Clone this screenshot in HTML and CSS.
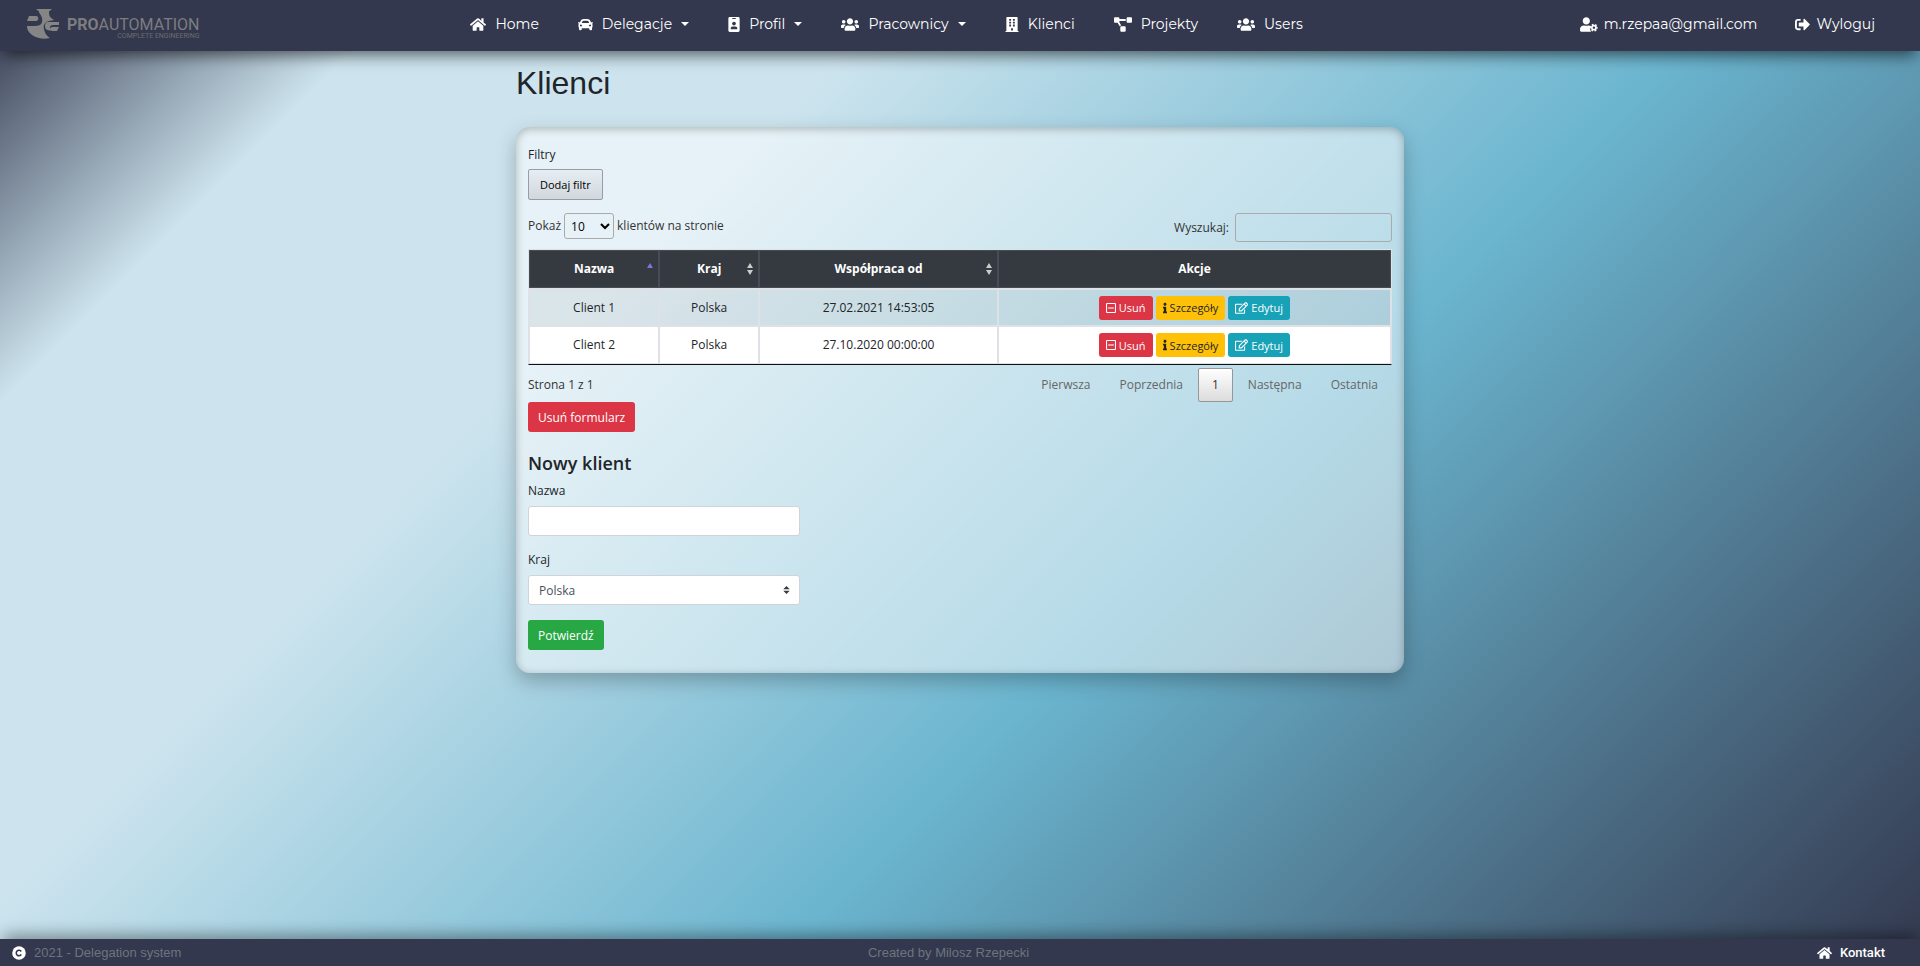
FILE: index.html
```html
<!DOCTYPE html>
<html lang="pl">
<head>
<meta charset="utf-8">
<title>Klienci - Delegation system</title>
<link rel="stylesheet" href="styles.css">
</head>
<body>
<svg class="sprite" aria-hidden="true">
  <symbol id="i-home" viewBox="0 0 576 512"><path d="M280.37 148.26L96 300.11V464a16 16 0 0 0 16 16l112.06-.29a16 16 0 0 0 15.92-16V368a16 16 0 0 1 16-16h64a16 16 0 0 1 16 16v95.64a16 16 0 0 0 16 16.05L464 480a16 16 0 0 0 16-16V300L295.67 148.26a12.19 12.19 0 0 0-15.3 0zM571.6 251.47L488 182.56V44.05a12 12 0 0 0-12-12h-56a12 12 0 0 0-12 12v72.61L318.47 43a48 48 0 0 0-61 0L4.34 251.47a12 12 0 0 0-1.6 16.9l25.5 31A12 12 0 0 0 45.15 301l235.22-193.74a12.19 12.19 0 0 1 15.3 0L530.9 301a12 12 0 0 0 16.9-1.6l25.5-31a12 12 0 0 0-1.7-16.93z"/></symbol>
  <symbol id="i-car" viewBox="0 0 512 512"><path d="M499.99 176h-59.87l-16.64-41.6C406.38 91.63 365.57 64 319.5 64h-127c-46.06 0-86.88 27.63-103.99 70.4L71.87 176H12.01C4.2 176-1.53 183.34.37 190.91l6 24C7.7 220.25 12.5 224 18.01 224h20.07C24.65 235.73 16 252.78 16 272v48c0 16.12 6.16 30.67 16 41.93V416c0 17.67 14.33 32 32 32h32c17.67 0 32-14.33 32-32v-32h256v32c0 17.67 14.33 32 32 32h32c17.67 0 32-14.33 32-32v-54.07c9.84-11.25 16-25.8 16-41.93v-48c0-19.22-8.65-36.27-22.07-48H494c5.51 0 10.31-3.75 11.64-9.09l6-24c1.89-7.57-3.84-14.91-11.65-14.91zm-352.06-17.83c7.29-18.22 24.94-30.17 44.57-30.17h127c19.63 0 37.28 11.95 44.57 30.17L384 208H128l19.93-49.83zM96 319.8c-19.2 0-32-12.76-32-31.9S76.8 256 96 256s48 28.71 48 47.85-28.8 15.95-48 15.95zm320 0c-19.2 0-48 3.19-48-15.95S396.8 256 416 256s32 12.76 32 31.9-12.8 31.9-32 31.9z"/></symbol>
  <symbol id="i-badge" viewBox="0 0 384 512"><path d="M336 0H48C21.5 0 0 21.5 0 48v416c0 26.5 21.5 48 48 48h288c26.5 0 48-21.5 48-48V48c0-26.5-21.5-48-48-48zM144 32h96c8.8 0 16 7.2 16 16s-7.2 16-16 16h-96c-8.8 0-16-7.2-16-16s7.2-16 16-16zm48 128c35.3 0 64 28.7 64 64s-28.7 64-64 64-64-28.7-64-64 28.7-64 64-64zm112 236.8c0 10.6-10 19.2-22.4 19.2H102.4C90 416 80 407.4 80 396.8v-19.2c0-31.8 30.1-57.6 67.2-57.6h5c12.3 5.1 25.7 8 39.8 8s27.6-2.9 39.8-8h5c37.1 0 67.2 25.8 67.2 57.6v19.2z"/></symbol>
  <symbol id="i-users" viewBox="0 0 640 512"><path d="M96 224c35.3 0 64-28.7 64-64s-28.7-64-64-64-64 28.7-64 64 28.7 64 64 64zm448 0c35.3 0 64-28.7 64-64s-28.7-64-64-64-64 28.7-64 64 28.7 64 64 64zm32 32h-64c-17.6 0-33.5 7.1-45.1 18.6 40.3 22.1 68.9 62 75.1 109.4h66c17.7 0 32-14.3 32-32v-32c0-35.3-28.7-64-64-64zm-256 0c61.9 0 112-50.1 112-112S381.9 32 320 32 208 82.1 208 144s50.1 112 112 112zm76.8 32h-8.3c-20.8 10-43.9 16-68.5 16s-47.6-6-68.5-16h-8.3C179.6 288 128 339.6 128 403.2V432c0 26.5 21.5 48 48 48h288c26.5 0 48-21.5 48-48v-28.8c0-63.6-51.6-115.2-115.2-115.2zm-223.7-13.4C161.5 263.1 145.6 256 128 256H64c-35.3 0-64 28.7-64 64v32c0 17.7 14.3 32 32 32h65.9c6.3-47.4 34.9-87.3 75.2-109.4z"/></symbol>
  <symbol id="i-building" viewBox="0 0 448 512"><path fill-rule="evenodd" d="M436 480h-20V24c0-13.300-10.700-24-24-24H56C42.700 0 32 10.700 32 24v456H12c-6.600 0-12 5.400-12 12v20h448v-20c0-6.600-5.400-12-12-12zM128 64h64v64h-64zM256 64h64v64h-64zM128 160h64v64h-64zM256 160h64v64h-64zM128 256h64v64h-64zM256 256h64v64h-64zM192 384h64v80h-64z"/></symbol>
  <symbol id="i-diagram" viewBox="0 0 640 512"><path d="M384 320H256c-17.67 0-32 14.33-32 32v128c0 17.67 14.33 32 32 32h128c17.67 0 32-14.33 32-32V352c0-17.67-14.33-32-32-32zM192 32c0-17.67-14.33-32-32-32H32C14.33 0 0 14.33 0 32v128c0 17.67 14.33 32 32 32h95.72l73.16 128.04C211.98 300.98 232.4 288 256 288h.28L192 175.51V128h224V64H192V32zM608 0H480c-17.67 0-32 14.33-32 32v128c0 17.67 14.33 32 32 32h128c17.67 0 32-14.33 32-32V32c0-17.67-14.33-32-32-32z"/></symbol>
  <symbol id="i-usercog" viewBox="0 0 640 512"><path d="M224 256c70.700 0 128-57.300 128-128S294.700 0 224 0 96 57.300 96 128s57.300 128 128 128zM134 288C60 288 0 348 0 422v42c0 26.500 21.500 48 48 48h352c-50-50-52-140-8-205-22-13-50-19-78-19h-17c-44 21-102 21-146 0z"/><circle cx="496" cy="368" r="74" fill="none" stroke="currentColor" stroke-width="62"/><circle cx="496" cy="368" r="118" fill="none" stroke="currentColor" stroke-width="44" stroke-dasharray="62 61.570" stroke-dashoffset="31"/></symbol>
  <symbol id="i-signout" viewBox="0 0 512 512"><path d="M497 273L329 441c-15 15-41 4.500-41-17v-96H152c-13.300 0-24-10.700-24-24v-96c0-13.300 10.700-24 24-24h136V88c0-21.400 25.900-32 41-17l168 168c9.300 9.400 9.300 24.600 0 34zM192 436v-40c0-6.600-5.400-12-12-12H96c-17.700 0-32-14.300-32-32V160c0-17.700 14.300-32 32-32h84c6.600 0 12-5.400 12-12V76c0-6.600-5.400-12-12-12H96c-53 0-96 43-96 96v192c0 53 43 96 96 96h84c6.600 0 12-5.400 12-12z"/></symbol>
  <symbol id="i-minus" viewBox="0 0 448 512"><rect x="24" y="56" width="400" height="400" rx="24" fill="none" stroke="currentColor" stroke-width="48"/><path d="M96 232h256v48H96z"/></symbol>
  <symbol id="i-info" viewBox="0 0 192 512"><path d="M20 424.229h20V279.771H20c-11.046 0-20-8.954-20-20V212c0-11.046 8.954-20 20-20h112c11.046 0 20 8.954 20 20v212.229h20c11.046 0 20 8.954 20 20V492c0 11.046-8.954 20-20 20H20c-11.046 0-20-8.954-20-20v-47.771c0-11.046 8.954-20 20-20zM96 0C56.235 0 24 32.235 24 72s32.235 72 72 72 72-32.235 72-72S135.764 0 96 0z"/></symbol>
  <symbol id="i-edit" viewBox="0 0 576 512"><path d="M402.300 344.900l32-32c5-5 13.700-1.500 13.700 5.700V464c0 26.500-21.500 48-48 48H48c-26.500 0-48-21.500-48-48V112c0-26.500 21.500-48 48-48h273.500c7.100 0 10.700 8.600 5.700 13.700l-32 32c-1.500 1.500-3.500 2.300-5.700 2.300H48v352h352V350.500c0-2.100.8-4.100 2.300-5.600zm156.600-201.800L296.300 405.700l-90.400 10c-26.200 2.900-48.500-19.200-45.600-45.600l10-90.400L432.900 17.100c22.900-22.900 59.900-22.900 82.700 0l43.200 43.200c22.900 22.900 22.900 60 .1 82.800zM460.100 174L402 115.900 216.200 301.800l-7.300 65.300 65.300-7.300L460.100 174zm64.800-79.700l-43.200-43.200c-4.100-4.100-10.800-4.100-14.800 0L436 82l58.100 58.100 30.900-30.900c4-4.200 4-10.800-.1-14.900z"/></symbol>
  <symbol id="i-copyright" viewBox="0 0 512 512"><circle cx="256" cy="256" r="248"/><path d="M338 312a100 100 0 1 1 0-112" fill="none" stroke="#33384e" stroke-width="56"/></symbol>
  <symbol id="i-logo" viewBox="0 0 33 30"><path d="M9 0h16l-3 2.500c0 5 1 6 5 8.500l-5 1c-4 1-6 4-5 8 1 5 3 7 6 9-4 1-8 1-11 0C5 27 0 23 0 17h8c6 0 8-3 7-8-1-4-3-4-3-6.500zM2 7h7c3 0 3 5 0 5H0zM20 13h12v3h-6c-4 0-4 4 0 5-4 1-8 0-8-3 0-2 0-4 2-5zM25 18h7l-2 4h-5c-2 0-2-4 0-4z"/></symbol>
</svg>

<header class="navbar">
  <a class="brand" href="#">
    <svg class="brand-mark"><use href="#i-logo"/></svg>
    <span class="brand-text">
      <span class="brand-name"><b>PRO</b>AUTOMATION</span>
      <span class="brand-sub">COMPLETE ENGINEERING</span>
    </span>
  </a>
  <nav class="menu">
    <a class="menu-link" href="#"><svg class="icon w16"><use href="#i-home"/></svg>Home</a>
    <a class="menu-link" href="#"><svg class="icon w15"><use href="#i-car"/></svg>Delegacje<span class="caret"></span></a>
    <a class="menu-link" href="#"><svg class="icon w12"><use href="#i-badge"/></svg>Profil<span class="caret"></span></a>
    <a class="menu-link" href="#"><svg class="icon w18"><use href="#i-users"/></svg>Pracownicy<span class="caret"></span></a>
    <a class="menu-link" href="#"><svg class="icon w14"><use href="#i-building"/></svg>Klienci</a>
    <a class="menu-link" href="#"><svg class="icon w18"><use href="#i-diagram"/></svg>Projekty</a>
    <a class="menu-link" href="#"><svg class="icon w18"><use href="#i-users"/></svg>Users</a>
  </nav>
  <div class="account">
    <a class="account-link" href="#"><svg class="icon w18"><use href="#i-usercog"/></svg>m.rzepaa@gmail.com</a>
    <a class="account-link" href="#"><svg class="icon w15"><use href="#i-signout"/></svg>Wyloguj</a>
  </div>
</header>

<main class="page">
  <h1>Klienci</h1>
  <section class="card">
    <div class="filters">
      <div>Filtry</div>
      <button class="filter-btn" type="button">Dodaj filtr</button>
    </div>
    <div class="toolbar">
      <label class="length">Pokaż
        <select><option>10</option><option>25</option></select>
        klientów na stronie</label>
      <label class="search">Wyszukaj: <input type="search"></label>
    </div>
    <table class="grid">
      <colgroup><col class="c1"><col class="c2"><col class="c3"><col></colgroup>
      <thead>
        <tr>
          <th><div class="th-in"><span class="th-label">Nazwa</span><span class="sort"><i class="up active"></i></span></div></th>
          <th><div class="th-in"><span class="th-label">Kraj</span><span class="sort"><i class="up"></i><i class="down"></i></span></div></th>
          <th><div class="th-in"><span class="th-label">Współpraca od</span><span class="sort"><i class="up"></i><i class="down"></i></span></div></th>
          <th>Akcje</th>
        </tr>
      </thead>
      <tbody>
        <tr class="odd">
          <td>Client 1</td><td>Polska</td><td>27.02.2021 14:53:05</td>
          <td><div class="actions">
            <button class="act danger" type="button"><svg class="icon a10"><use href="#i-minus"/></svg>Usuń</button>
            <button class="act warning" type="button"><svg class="icon a4"><use href="#i-info"/></svg>Szczegóły</button>
            <button class="act info" type="button"><svg class="icon a13"><use href="#i-edit"/></svg>Edytuj</button>
          </div></td>
        </tr>
        <tr>
          <td>Client 2</td><td>Polska</td><td>27.10.2020 00:00:00</td>
          <td><div class="actions">
            <button class="act danger" type="button"><svg class="icon a10"><use href="#i-minus"/></svg>Usuń</button>
            <button class="act warning" type="button"><svg class="icon a4"><use href="#i-info"/></svg>Szczegóły</button>
            <button class="act info" type="button"><svg class="icon a13"><use href="#i-edit"/></svg>Edytuj</button>
          </div></td>
        </tr>
      </tbody>
    </table>
    <div class="table-foot">
      <div class="left">
        <div class="page-info">Strona 1 z 1</div>
        <button class="btn danger" type="button">Usuń formularz</button>
      </div>
      <nav class="pager">
        <a href="#">Pierwsza</a><a href="#">Poprzednia</a><a class="current" href="#">1</a><a href="#">Następna</a><a href="#">Ostatnia</a>
      </nav>
    </div>
    <form class="client-form">
      <h2>Nowy klient</h2>
      <div class="field">
        <label for="name">Nazwa</label>
        <input id="name" type="text">
      </div>
      <div class="field">
        <label for="country">Kraj</label>
        <div class="select-wrap">
          <select id="country"><option>Polska</option></select>
          <svg class="updown" viewBox="0 0 4 5"><path d="M2 0L0 2h4zm0 5L0 3h4z"/></svg>
        </div>
      </div>
      <button class="btn success" type="button">Potwierdź</button>
    </form>
  </section>
</main>

<footer class="footer">
  <div class="foot-left"><svg class="icon w14"><use href="#i-copyright"/></svg>2021 - Delegation system</div>
  <div>Created by Milosz Rzepecki</div>
  <div class="foot-right"><a href="#"><svg class="icon w15"><use href="#i-home"/></svg>Kontakt</a></div>
</footer>
</body>
</html>
```
FILE: styles.css
```css
*, *::before, *::after { box-sizing: border-box; }

body {
  margin: 0;
  min-height: 100vh;
  display: flex;
  flex-direction: column;
  font: 12px/18px "Segoe UI", "Open Sans", "Noto Sans", sans-serif;
  color: #212529;
  background: linear-gradient(135deg, #33384e 0%, #cde4ee 14%, #cde4ee 31%, #6bb5cf 60%, #33384e 100%);
}

a { color: inherit; text-decoration: none; }
button, input, select { font-family: inherit; }
.sprite { position: absolute; width: 0; height: 0; }
.icon { flex: none; height: 16px; fill: currentColor; }
.w12 { width: 12px; }
.w14 { width: 14px; }
.w15 { width: 15px; }
.w16 { width: 16px; }
.w18 { width: 18px; }

/* Top bar */
.navbar {
  display: flex;
  align-items: center;
  justify-content: space-between;
  height: 51px;
  padding: 0 45px 3px 27px;
  background: #33384e;
  color: #fff;
  font: 14px/24px Montserrat, Inter, sans-serif;
  box-shadow: 0 8px 16px -4px rgba(0, 0, 0, .6);
}
.brand { display: flex; align-items: center; gap: 7px; color: #7d7d80; }
.brand-mark { width: 33px; height: 30px; fill: #858585; }
.brand-text { display: flex; flex-direction: column; padding-top: 10px; font-family: Roboto, sans-serif; }
.brand-name { font-size: 16px; line-height: 14px; }
.brand-sub { font-size: 7px; line-height: 8px; text-align: right; color: #6c6c70; }
.menu { display: flex; gap: 39px; padding-right: 6px; }
.menu-link { display: flex; align-items: center; gap: 9px; }
.menu-link .icon { height: 15px; }
.account { display: flex; gap: 38px; }
.account-link { display: flex; align-items: center; gap: 6px; }
.account-link .icon { height: 15px; }
.caret {
  border: 4px solid transparent;
  border-top-color: #fff;
  border-bottom-width: 0;
}

/* Content */
.page { flex: 1; width: 100%; max-width: 888px; margin: 0 auto; padding-top: 13px; }
h1 { margin: 0 0 25px; font: 32px/38px "Liberation Sans", Arial, sans-serif; }
.card {
  padding: 19px 12px 23px;
  border-radius: 14px;
  background: rgba(255, 255, 255, .5);
  box-shadow: 0 8px 20px rgba(0, 0, 0, .25), inset 0 2px 8px rgba(0, 0, 0, .25);
}
.filters { margin-bottom: 13px; }
.filter-btn {
  height: 31px;
  margin-top: 5px;
  padding: 0 11px;
  border: 1px solid #999ca6;
  border-radius: 2px;
  background: linear-gradient(rgba(230, 235, 240, .6), rgba(195, 198, 204, .6));
  color: #000;
  font-size: 11px;
}
.toolbar { display: flex; justify-content: space-between; align-items: flex-start; margin-bottom: 7px; color: #333; }
.length { display: flex; align-items: center; gap: 3px; }
.length select {
  width: 50px;
  height: 26px;
  padding: 0 2px;
  border: 1px solid #aaa;
  border-radius: 3px;
  background: transparent;
  font-size: 12px;
}
.search { display: flex; align-items: center; gap: 6px; }
.search input { width: 157px; height: 29px; border: 1px solid #aaa; border-radius: 3px; background: transparent; }

.grid {
  width: 100%;
  table-layout: fixed;
  border-collapse: separate;
  border-spacing: 0;
  border: 1px solid #dee2e6;
  border-bottom-color: #111;
  text-align: center;
}
.c1 { width: 15.1%; }
.c2 { width: 11.6%; }
.c3 { width: 27.7%; }
.grid th { height: 38px; padding: 0; border: 1px solid #454d55; background: #343a40; color: #fff; font-weight: 700; }
.grid td { height: 38px; padding: 0; border: 1px solid #dee2e6; background: #fff; }
.grid .odd td { background: rgba(0, 0, 0, .05); border-top-width: 2px; }
.th-in { display: grid; grid-template-columns: 18px 1fr 18px; align-items: center; }
.th-label { grid-column: 2; white-space: nowrap; }
.sort { display: flex; flex-direction: column; gap: 2px; height: 12px; }
.sort i { width: 0; border: 3px solid transparent; margin-left: 7px; }
.sort .up { border-top-width: 0; border-bottom: 5px solid #ccc; }
.sort .down { border-bottom-width: 0; border-top: 5px solid #ccc; }
.sort .active { border-bottom-color: #7878d8; }

.actions { display: flex; justify-content: center; gap: 3px; }
.act {
  display: flex;
  align-items: center;
  gap: 3px;
  height: 24px;
  padding: 0 7px;
  border: 0;
  border-radius: 3px;
  color: #fff;
  font-size: 11px;
}
.act .icon { height: 12px; }
.a4 { width: 4px; }
.a10 { width: 10px; }
.a13 { width: 13px; }
.danger { background: #dc3545; }
.info { background: #17a2b8; }
.success { background: #28a745; }
.act.warning { background: #ffc107; color: #212529; }

.table-foot { display: flex; justify-content: space-between; align-items: flex-start; }
.left { padding-top: 11px; }
.page-info { margin-bottom: 8px; color: #333; }
.btn {
  height: 30px;
  padding: 0 10px;
  border: 0;
  border-radius: 3px;
  color: #fff;
  font-size: 12px;
}
.pager { display: flex; gap: 1px; padding-top: 3px; color: #666; }
.pager a { padding: 7px 13px; border: 1px solid transparent; border-radius: 2px; }
.pager .current { border-color: #979797; background: linear-gradient(#fff, #dcdcdc); color: #333; }

.client-form { max-width: 272px; margin-top: 20px; }
h2 { margin: 0 0 8px; font-size: 18px; line-height: 22px; font-weight: 600; }
.field { margin-bottom: 15px; }
.field label { display: block; margin-bottom: 6px; }
.field input, .field select {
  display: block;
  width: 100%;
  height: 30px;
  padding: 0 10px;
  border: 1px solid #ced4da;
  border-radius: 3px;
  background: #fff;
  color: #495057;
  font-size: 12px;
}
.field select { appearance: none; }
.select-wrap { position: relative; }
.updown { position: absolute; right: 10px; top: 11px; width: 7px; height: 8px; fill: #343a40; }

/* Bottom bar */
.footer {
  display: grid;
  grid-template-columns: 1fr auto 1fr;
  align-items: center;
  height: 27px;
  padding: 0 35px 0 12px;
  background: #33384e;
  color: #6c757d;
  font: 13px/20px "Liberation Sans", Arial, sans-serif;
  box-shadow: 0 -8px 16px -4px rgba(0, 0, 0, .4);
}
.foot-left { display: flex; align-items: center; gap: 8px; }
.foot-left .icon { color: #fff; }
.foot-right { display: flex; justify-content: flex-end; color: #fff; font-family: Roboto, sans-serif; font-weight: 500; }
.foot-right a { display: flex; align-items: center; gap: 8px; }
```
